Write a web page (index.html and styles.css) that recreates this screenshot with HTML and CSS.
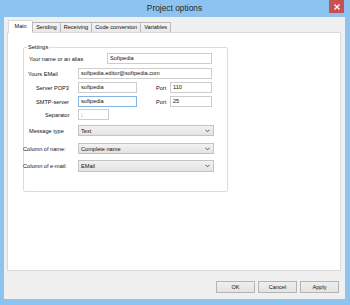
FILE: index.html
```html
<!DOCTYPE html>
<html>
<head>
<meta charset="utf-8">
<link rel="stylesheet" href="styles.css">
</head>
<body>
<div class="window">
  <div class="titlebar">
    <div class="title">Project options</div>
    <div class="close"><svg width="6" height="6" viewBox="0 0 6 6"><path d="M0.5 0.5 L5.5 5.5 M5.5 0.5 L0.5 5.5" stroke="#fff" stroke-width="1.3"/></svg></div>
  </div>
  <div class="client">
    <div class="tabs">
      <div class="tab active">Main</div>
      <div class="tab">Sending</div>
      <div class="tab">Receiving</div>
      <div class="tab">Code conversion</div>
      <div class="tab">Variables</div>
    </div>
    <div class="page">
      <div class="group">
        <div class="legend">Settings</div>
        <div class="row r-name">
          <div class="lbl lbl-wide pl5">Your name or an alias</div>
          <div class="input w-name">Softpedia</div>
        </div>
        <div class="row r-email">
          <div class="lbl pl4">Yours EMail</div>
          <div class="input w-email">softpedia.editor@softpedia.com</div>
        </div>
        <div class="row r-pop">
          <div class="lbl pl12">Server POP3</div>
          <div class="input w-server">softpedia</div>
          <div class="port">Port</div>
          <div class="input w-port">110</div>
        </div>
        <div class="row r-smtp">
          <div class="lbl pl12">SMTP-server</div>
          <div class="input w-server focus">softpedia</div>
          <div class="port">Port</div>
          <div class="input w-port">25</div>
        </div>
        <div class="row r-sep">
          <div class="lbl pl21">Separator</div>
          <div class="input w-sep">;</div>
        </div>
        <div class="row r-msg">
          <div class="lbl pl5">Message type</div>
          <div class="select"><span>Text</span><svg width="5" height="4" viewBox="0 0 5 4"><path d="M0.5 0.8 L2.5 2.8 L4.5 0.8" fill="none" stroke="#444" stroke-width="0.9"/></svg></div>
        </div>
        <div class="row r-col">
          <div class="lbl lbl-out">Column of name:</div>
          <div class="select"><span>Complete name</span><svg width="5" height="4" viewBox="0 0 5 4"><path d="M0.5 0.8 L2.5 2.8 L4.5 0.8" fill="none" stroke="#444" stroke-width="0.9"/></svg></div>
        </div>
        <div class="row r-col2">
          <div class="lbl lbl-out">Column of e-mail:</div>
          <div class="select"><span>EMail</span><svg width="5" height="4" viewBox="0 0 5 4"><path d="M0.5 0.8 L2.5 2.8 L4.5 0.8" fill="none" stroke="#444" stroke-width="0.9"/></svg></div>
        </div>
      </div>
    </div>
    <div class="buttons">
      <div class="btn">OK</div>
      <div class="btn">Cancel</div>
      <div class="btn">Apply</div>
    </div>
  </div>
</div>
</body>
</html>
```
FILE: styles.css
```css
html, body {
  margin: 0;
  padding: 0;
}
body {
  width: 350px;
  height: 305px;
  overflow: hidden;
  font-family: "Liberation Sans", Arial, sans-serif;
  font-size: 5.6px;
  color: #111;
}
.window {
  width: 350px;
  height: 305px;
  box-sizing: border-box;
  background: #8cc3f1;
  padding: 0 5px 6px 4px;
  display: flex;
  flex-direction: column;
}
.titlebar {
  height: 17px;
  display: grid;
  grid-template-columns: 1fr auto 1fr;
  align-items: start;
}
.title {
  grid-column: 2;
  font-size: 8.4px;
  color: #2a2a2a;
  line-height: 16px;
  white-space: nowrap;
}
.close {
  grid-column: 3;
  justify-self: end;
  margin-right: 1px;
  width: 15px;
  height: 13px;
  background: #c75050;
  display: flex;
  align-items: center;
  justify-content: center;
}
.close svg { display: block; }
.client {
  flex: 1;
  background: #f0f0f0;
  padding: 3px 4px 6px 3px;
  display: flex;
  flex-direction: column;
}
.tabs {
  display: flex;
  align-items: flex-end;
  height: 13px;
  margin-left: 1px;
  margin-bottom: -1px;
  position: relative;
  z-index: 1;
}
.tab {
  height: 10px;
  box-sizing: border-box;
  border: 1px solid #b9b9b9;
  border-bottom: none;
  margin-right: -1px;
  padding: 0 3px;
  background: linear-gradient(#f3f3f3, #e8e8e8);
  line-height: 9px;
  white-space: nowrap;
  margin-bottom: 1px;
}
.tab.active {
  height: 13px;
  background: #fff;
  border-color: #d9d9d9;
  padding: 0 5.5px;
  margin-bottom: 0;
  line-height: 11px;
}
.page {
  flex: 1;
  background: #fff;
  border: 1px solid #d9d9d9;
  box-sizing: border-box;
  display: flex;
  flex-direction: column;
  align-items: flex-start;
}
.group {
  position: relative;
  margin: 14px 0 0 15px;
  width: 205px;
  height: 145px;
  box-sizing: border-box;
  border: 1px solid #dcdcdc;
  border-radius: 2px;
  padding-top: 5px;
}
.legend {
  position: absolute;
  top: -4px;
  left: 3px;
  background: #fff;
  padding: 0 1px;
  line-height: 7px;
}
.row {
  display: flex;
  align-items: center;
  height: 11px;
}
.r-email { margin-top: 4px; }
.r-pop { margin-top: 3px; }
.r-smtp { margin-top: 3px; }
.r-sep { margin-top: 2px; }
.r-msg { margin-top: 5px; }
.r-col { margin-top: 7px; }
.r-col2 { margin-top: 6px; height: 12px; }
.lbl {
  width: 54px;
  box-sizing: border-box;
  white-space: nowrap;
}
.lbl-wide { width: 83px; }
.lbl-out { margin-left: -1px; width: 55px; }
.pl4 { padding-left: 4px; }
.pl5 { padding-left: 5px; }
.pl12 { padding-left: 12px; }
.pl21 { padding-left: 21px; }
.input {
  height: 11px;
  box-sizing: border-box;
  border: 1px solid #cdcdcd;
  background: #fff;
  padding-left: 2px;
  line-height: 9px;
  white-space: nowrap;
  overflow: hidden;
}
.input.focus { border-color: #84b4e4; }
.w-name { width: 105px; }
.w-email { width: 134px; }
.w-server { width: 59px; }
.w-port { width: 42px; }
.w-sep { width: 31px; }
.port {
  margin-left: 19px;
  width: 14px;
}
.select {
  width: 136px;
  height: 100%;
  box-sizing: border-box;
  border: 1px solid #c3c3c3;
  background: linear-gradient(#f2f2f2, #e3e3e3);
  display: flex;
  align-items: center;
  justify-content: space-between;
  padding: 0 3px 0 2px;
}
.select svg { display: block; }
.buttons {
  display: flex;
  justify-content: flex-end;
  gap: 3px;
  margin-top: 10px;
  padding-right: 2px;
}
.btn {
  width: 39px;
  height: 12px;
  box-sizing: border-box;
  border: 1px solid #b4b4b4;
  background: linear-gradient(#efefef, #e3e3e3);
  text-align: center;
  line-height: 10px;
}
```
